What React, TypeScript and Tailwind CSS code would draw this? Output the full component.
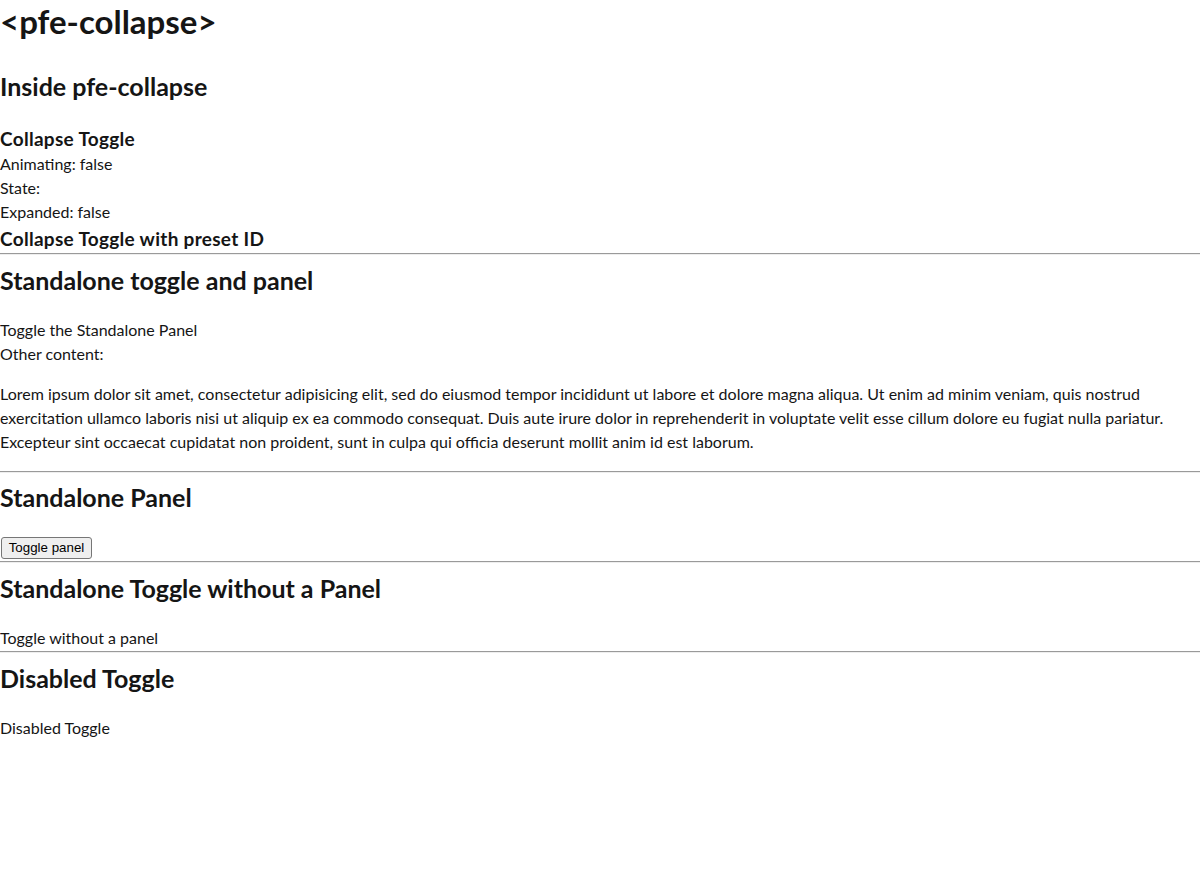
function Rule() {
  return <hr className="h-0 border-0 border-t border-b border-t-[#9a9a9a] border-b-[#eeeeee]" />;
}

export default function App() {
  const h2 = "text-[25px] leading-[32px] font-bold";
  return (
    <div className="font-['Lato','Noto_Sans',sans-serif] text-[16px] text-[#151515] bg-white min-h-[885px]">
      <h1 className="text-[33px] leading-[43px] font-bold">&lt;pfe-collapse&gt;</h1>
      <h2 className={`mt-[27px] ${h2}`}>Inside pfe-collapse</h2>
      <h3 className="mt-[25px] text-[19px] leading-[24px] font-bold tracking-[0.3px]">Collapse Toggle</h3>
      <div className="mt-[1px] leading-[24px]">
        <div>Animating: false</div>
        <div>State:</div>
        <div>Expanded: false</div>
      </div>
      <h3 className="text-[19px] leading-[29px] font-bold tracking-[0.3px]">Collapse Toggle with preset ID</h3>
      <Rule />

      <h2 className={`mt-[9px] ${h2}`}>Standalone toggle and panel</h2>
      <div className="mt-[22px] leading-[24px]">
        <div>Toggle the Standalone Panel</div>
        <div>Other content:</div>
      </div>
      <p className="mt-[16px] mb-[17px] leading-[24px]">
        Lorem ipsum dolor sit amet, consectetur adipisicing elit, sed do eiusmod tempor incididunt ut labore et dolore magna aliqua. Ut enim ad minim veniam, quis nostrud exercitation ullamco laboris nisi ut aliquip ex ea commodo consequat. Duis aute irure dolor in reprehenderit in voluptate velit esse cillum dolore eu fugiat nulla pariatur. Excepteur sint occaecat cupidatat non proident, sunt in culpa qui officia deserunt mollit anim id est laborum.
      </p>
      <Rule />

      <h2 className={`mt-[8px] ${h2}`}>Standalone Panel</h2>
      <div className="mt-[24px] flex">
        <button className="ml-[1px] w-[91px] h-[22px] bg-[#efefef] border border-[#767676] rounded-[3px] text-[13.33px] leading-[16px] text-black font-['Liberation_Sans',Arial,sans-serif]">
          Toggle panel
        </button>
      </div>
      <div className="mt-[2px]">
        <Rule />
      </div>

      <h2 className={`mt-[9px] ${h2}`}>Standalone Toggle without a Panel</h2>
      <div className="mt-[22px] leading-[24px]">Toggle without a panel</div>
      <div className="mt-[1px]">
        <Rule />
      </div>

      <h2 className={`mt-[9px] ${h2}`}>Disabled Toggle</h2>
      <div className="mt-[22px] leading-[24px]">Disabled Toggle</div>
    </div>
  );
}
